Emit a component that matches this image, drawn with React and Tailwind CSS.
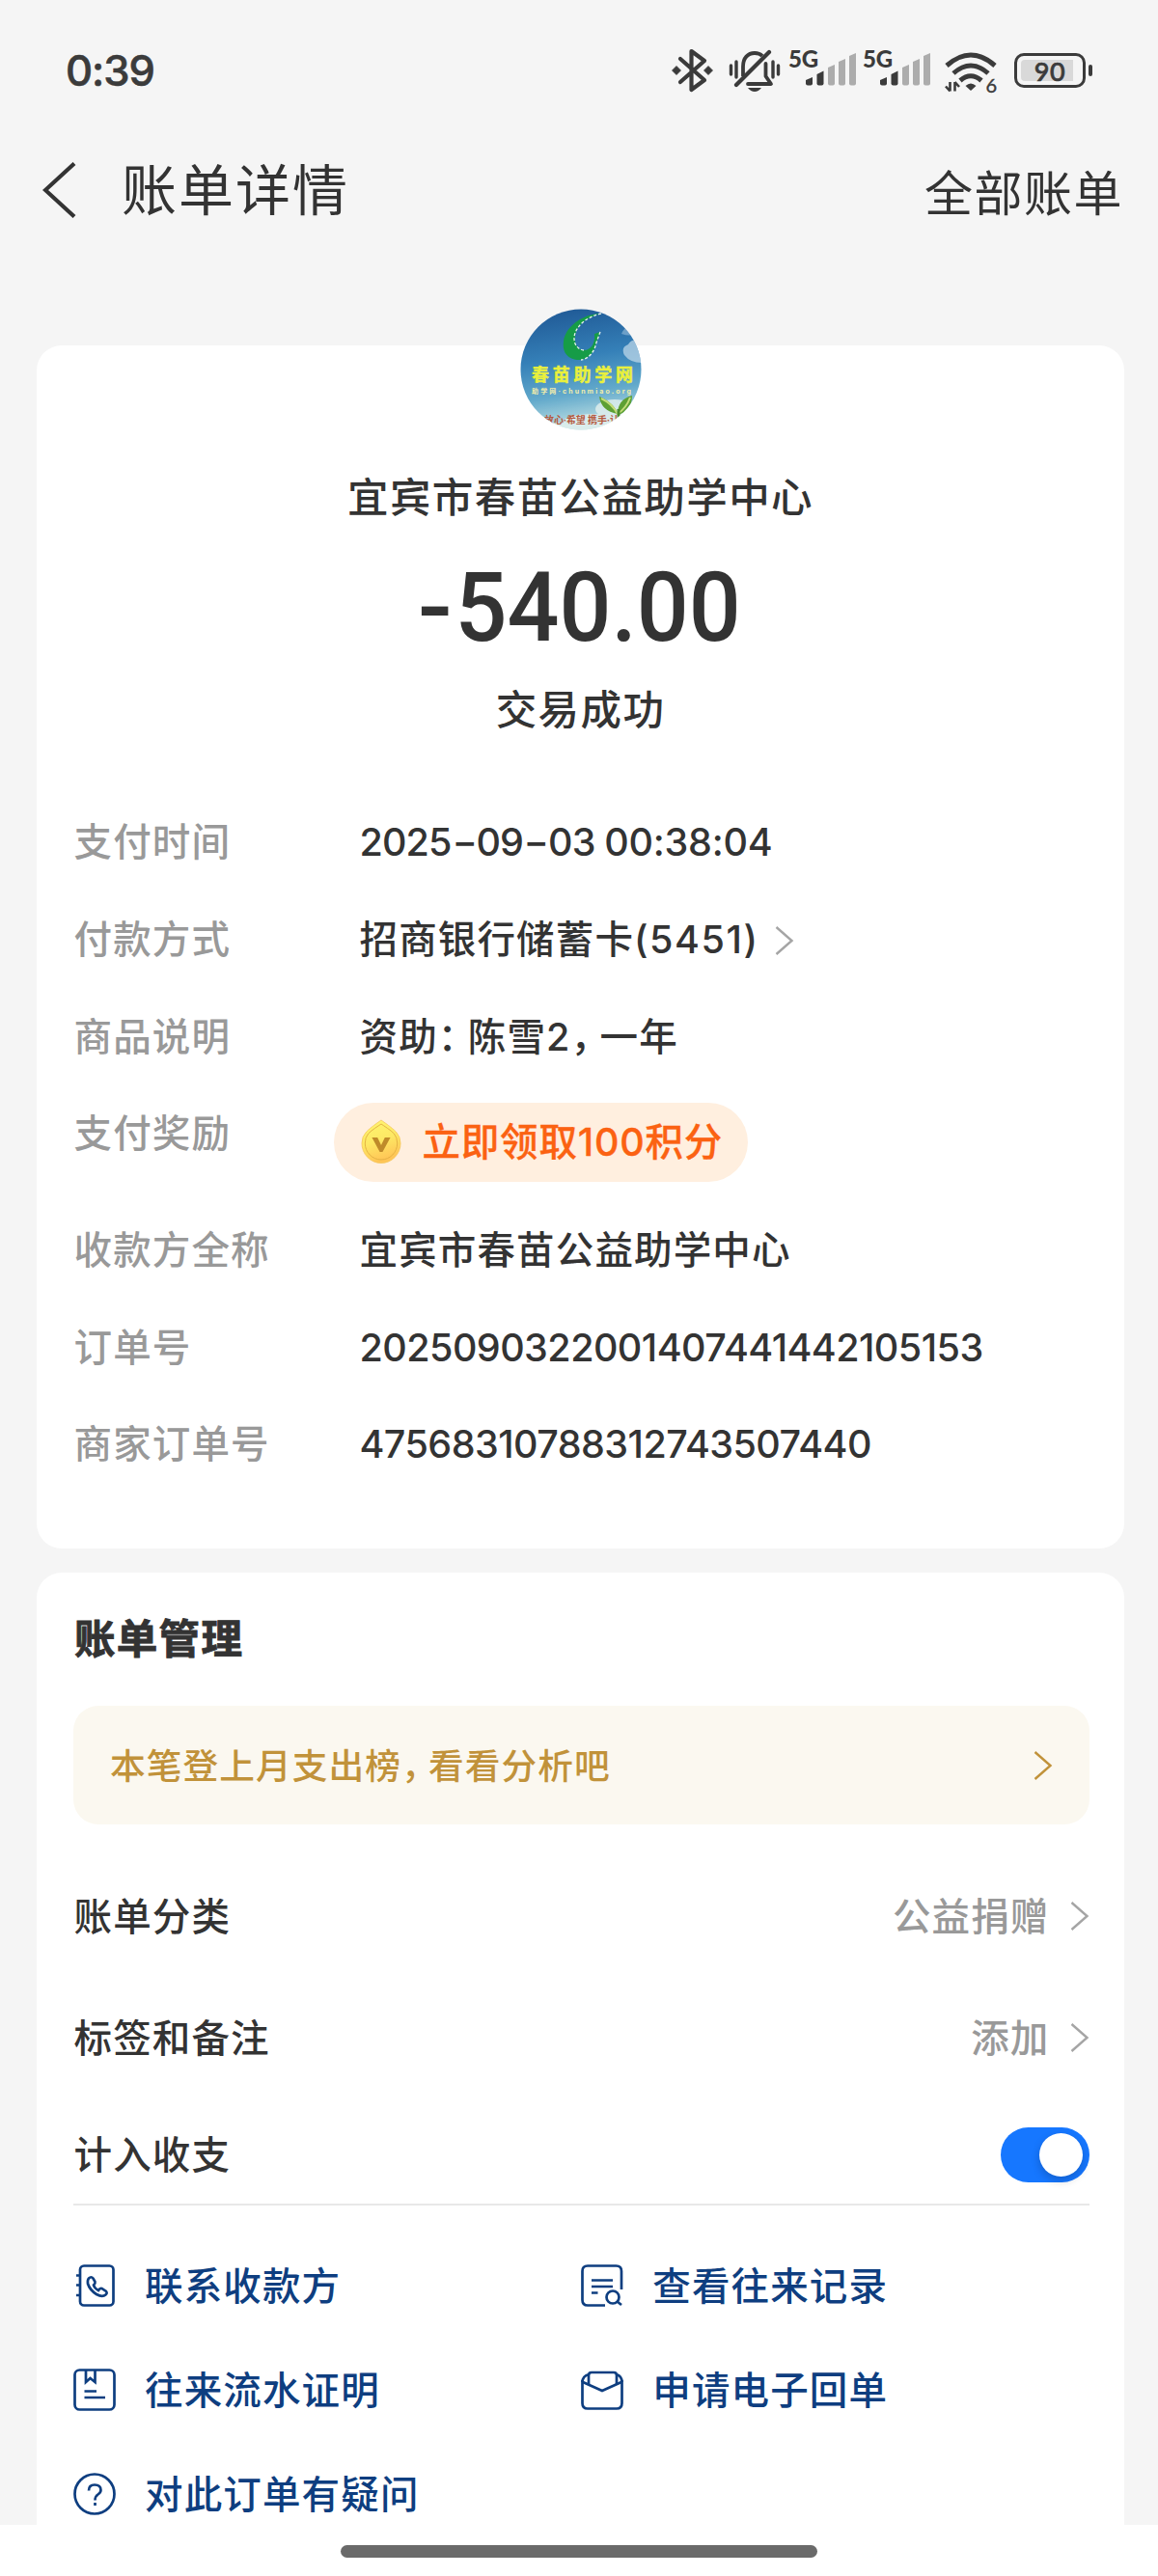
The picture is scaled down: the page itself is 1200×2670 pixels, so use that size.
function Chevron({ className = "text-[#a5a5a5]" }) {
  return (
    <svg width="20" height="30" viewBox="0 0 20 30" fill="none" className={className}>
      <path d="M1.5 1L17.5 15L1.5 29" stroke="currentColor" strokeWidth="2.4" />
    </svg>
  );
}

function Signal() {
  return (
    <div className="relative h-[46px] w-[70px]">
      <span className="absolute left-[-1px] top-0 font-['Lato','Noto_Sans_CJK_SC',sans-serif] text-[24px] font-black leading-[22px] tracking-[-0.2px]">5G</span>
      <svg width="54" height="34" viewBox="0 0 54 34" className="absolute left-[16px] top-[5px]">
        <path d="M1 28L8 25V31.500Q8 33.500 6 33.500H3Q1 33.500 1 31.500Z" fill="#3b3b3b" />
        <path d="M12.500 22L19.500 18.500V31.500Q19.500 33.500 17.500 33.500H14.500Q12.500 33.500 12.500 31.500Z" fill="#3b3b3b" />
        <path d="M24 15L31 12V31.500Q31 33.500 29 33.500H26Q24 33.500 24 31.500Z" fill="#acacac" />
        <path d="M35 9L42 6V31.500Q42 33.500 40 33.500H37Q35 33.500 35 31.500Z" fill="#acacac" />
        <path d="M46 3L53 0V31.500Q53 33.500 51 33.500H48Q46 33.500 46 31.500Z" fill="#acacac" />
      </svg>
    </div>
  );
}

function StatusBar() {
  return (
    <div className="flex h-[146px] items-center pl-[68px] pr-[68px] text-[#3b3b3b]">
      <div className="pt-[1px] text-[43.500px] font-medium leading-none tracking-[-1px] [-webkit-text-stroke:0.600px]">0:39</div>
      <div className="ml-auto flex items-center">
        <svg width="44" height="48" viewBox="0 0 44 48" fill="none">
          <path d="M9 12L34 34L20.500 44V4L34 14L9 36" stroke="currentColor" strokeWidth="4.200" strokeLinejoin="round" strokeLinecap="round" />
          <path d="M0.500 24L5 19.500L9.500 24L5 28.500ZM33.500 24L38 19.500L42.500 24L38 28.500Z" fill="currentColor" stroke="currentColor" strokeWidth="0.800" strokeLinejoin="round" />
        </svg>
        <svg width="54" height="48" viewBox="0 0 54 48" fill="none" className="ml-[15px]">
          <path d="M15 30V20C15 11 20 6 27 6C30 6 33 7 35 9" stroke="currentColor" strokeWidth="3.800" />
          <path d="M38.500 17V30L44 38H20" stroke="currentColor" strokeWidth="3.800" strokeLinecap="round" strokeLinejoin="round" />
          <path d="M8 39L42 5" stroke="currentColor" strokeWidth="4.200" strokeLinecap="round" />
          <path d="M20 42H34Q31 46 27 46Q23 46 20 42Z" fill="currentColor" />
          <path d="M2.500 19V28M8 15V31M46 15V31M51.500 19V28" stroke="currentColor" strokeWidth="3.400" strokeLinecap="round" />
        </svg>
        <div className="ml-[9px]"><Signal /></div>
        <div className="ml-[7px]"><Signal /></div>
        <div className="relative ml-[14px] h-[48px] w-[54px]">
          <svg width="54" height="48" viewBox="0 0 54 48" fill="none">
            <path d="M2 19Q27 -3 52 19" stroke="currentColor" strokeWidth="5" />
            <path d="M9 27Q27 11 45 27" stroke="currentColor" strokeWidth="5" />
            <path d="M16 34.500Q27 25 38 34.500" stroke="currentColor" strokeWidth="5" />
            <path d="M21.500 40Q27 35 32.500 40L27 45Z" fill="currentColor" />
            <path d="M5.500 36V45.500M5.500 45.500L1 40.500M10.500 45.500V36M10.500 36L15 41" stroke="currentColor" strokeWidth="2.600" />
          </svg>
          <span className="absolute bottom-[1px] right-0 font-['Lato',sans-serif] text-[20px] leading-[16px] [-webkit-text-stroke:0.400px]">6</span>
        </div>
        <div className="relative ml-[18px] flex h-[36px] w-[74px] items-center rounded-[10px] border-[3px] border-[#3b3b3b] px-[4px]">
          <div className="h-[22px] w-[54px] rounded-l-[4px] bg-[#d9d9d9]" />
          <span className="absolute inset-0 flex items-center justify-center font-['Lato',sans-serif] text-[27px] font-medium leading-none tracking-[0.500px] [-webkit-text-stroke:0.700px]">90</span>
        </div>
        <div className="ml-[3px] h-[12px] w-[4px] rounded-[2px] bg-[#3b3b3b]" />
      </div>
    </div>
  );
}

function Avatar() {
  return (
    <svg width="126" height="126" viewBox="0 0 126 126" className="block">
      <defs>
        <linearGradient id="sky" x1="0" y1="0" x2="0.150" y2="1">
          <stop offset="0" stopColor="#1d5592" />
          <stop offset="0.450" stopColor="#3580b8" />
          <stop offset="0.750" stopColor="#62a9cb" />
          <stop offset="1" stopColor="#b9dde2" />
        </linearGradient>
        <clipPath id="disc"><circle cx="63" cy="63" r="62.500" /></clipPath>
      </defs>
      <g clipPath="url(#disc)">
        <rect width="126" height="126" fill="url(#sky)" />
        <g fill="#c5dcec" opacity="0.700">
          <path d="M108 48Q104 40 112 37Q116 30 126 34V56Q114 56 108 48Z" />
          <path d="M105 26Q108 18 116 20Q122 16 126 24Q116 30 105 26Z" opacity="0.600" />
        </g>
        <g fill="#e3f0ee" opacity="0.800">
          <ellipse cx="98" cy="104" rx="20" ry="10" />
          <ellipse cx="76" cy="118" rx="32" ry="9" />
          <ellipse cx="30" cy="124" rx="26" ry="6" />
        </g>
        <path d="M84 5C64 5 46 20 45 34C43 47 52 54 63 53C71 52 77 45 79 35L83 24L77 26C78 35 74 43 66 43C58 43 55 33 58 24C61 15 71 8 84 5Z" fill="#169c47" />
        <path d="M84 5C71 8 61 15 57 25C54 34 58 42 66 43M83 24L79 35C77 45 71 52 63 53" fill="none" stroke="#e6f3ee" strokeWidth="1.300" strokeDasharray="3 2" />
        <text x="12" y="75" fontSize="18" fontWeight="700" fill="#e9f03c" stroke="#e9f03c" strokeWidth="0.500" textLength="105">春苗助学网</text>
        <text x="12" y="88" fontSize="7" fontWeight="700" fill="#f1edaa" textLength="103">助学网·chunmiao.org</text>
        <path d="M102 112Q99 98 82 91Q84 106 101 109Q101 94 116 90Q116 105 102 110Z" fill="#5da033" />
        <path d="M84 93Q95 98 101 109Q110 103 114 92" stroke="#c3dc79" strokeWidth="2" fill="none" />
        <path d="M102 104V116" stroke="#4a8a2c" strokeWidth="3" />
        <text x="25" y="119" fontSize="10" fontWeight="700" fill="#b5583c" textLength="78">放心·希望 携手·让</text>
      </g>
    </svg>
  );
}

function Row({ label, children, className = "h-[101px]" }) {
  return (
    <div className={`flex items-center ${className}`}>
      <div className="w-[296px] text-[#999999]">{label}</div>
      <div className="flex items-center text-[#333333]">{children}</div>
    </div>
  );
}

function Dash() {
  return <span className="inline-block w-[26px] scale-x-[1.450] text-center">-</span>;
}

function Coin() {
  return (
    <svg width="42" height="46" viewBox="0 0 44 46" preserveAspectRatio="none" className="-mt-[2px]">
      <defs>
        <linearGradient id="gold" x1="0" y1="0" x2="0.300" y2="1">
          <stop offset="0" stopColor="#fff772" />
          <stop offset="0.550" stopColor="#fde864" />
          <stop offset="1" stopColor="#ffc556" />
        </linearGradient>
      </defs>
      <path d="M22 1C25 3 34 9 38 13Q43 18 43 25A21 20.500 0 0 1 1 25Q1 18 6 13C10 9 19 3 22 1Z" fill="url(#gold)" stroke="#f5c65a" strokeWidth="0.800" />
      <path d="M22 5C25 7 32 11 36 15Q39.500 19 39.500 25A17.500 17 0 0 1 4.500 25Q4.500 19 8 15C12 11 19 7 22 5Z" fill="none" stroke="#e3b144" strokeWidth="1" />
      <path d="M12 19H18L22 27L26 19H32L23.500 34H20.500Z" fill="#bf8a2a" />
    </svg>
  );
}

function DetailCard() {
  return (
    <section className="ml-[38px] mr-[35px] flex h-[1247px] flex-col rounded-[26px] bg-white">
      <div className="-mt-[38px] flex justify-center"><Avatar /></div>
      <div className="mt-[40px] flex h-[60px] items-center justify-center text-[42.500px] font-medium leading-none tracking-[1.400px] text-[#333333]">宜宾市春苗公益助学中心</div>
      <div className="mt-[33px] flex h-[100px] items-center justify-center">
        <div className="flex scale-x-[0.940] font-['Roboto',sans-serif] text-[101px] font-medium leading-none text-[#333333]">
          <span className="mr-[5px] scale-x-[1.120]">-</span>
          <span>540.00</span>
        </div>
      </div>
      <div className="mt-[27px] flex h-[60px] items-center justify-center text-[42.500px] font-medium leading-none tracking-[1.400px] text-[#333333]">交易成功</div>
      <div className="mt-[57px] flex flex-col pl-[38.500px] text-[39.500px] font-medium leading-none tracking-[1.150px]">
        <Row label="支付时间">
          <div className="tracking-[-0.900px]">2025<Dash />09<Dash />03 <span className="tracking-[-0.200px]">00:38:04</span></div>
        </Row>
        <Row label="付款方式">
          <div>招商银行储蓄卡<span className="tracking-[1.500px]">(5451)</span></div>
          <div className="ml-[16px]"><Chevron /></div>
        </Row>
        <Row label="商品说明">
          <div>资助<span className="tracking-[-8.500px]">：</span>陈雪2<span className="tracking-[-9.500px]">，</span>一年</div>
        </Row>
        <div className="flex h-[120px]">
          <div className="flex h-[100px] w-[296px] items-center text-[#999999]">支付奖励</div>
          <div className="-ml-[27px] mt-[17px] flex h-[82px] w-[429px] items-center rounded-full bg-[#ffefdf] pl-[28px] text-[#fb6212]">
            <Coin />
            <span className="ml-[22px] pt-[2px] tracking-[0.800px] [-webkit-text-stroke:0.300px]">立即领取100积分</span>
          </div>
        </div>
        <Row label="收款方全称">宜宾市春苗公益助学中心</Row>
        <Row label="订单号"><span className="tracking-[-0.550px]">2025090322001407441442105153</span></Row>
        <Row label="商家订单号" className="h-[99px]"><span className="tracking-[-0.550px]">47568310788312743507440</span></Row>
      </div>
    </section>
  );
}

const iconProps = { width: 44, height: 44, viewBox: "0 0 44 44", fill: "none", stroke: "currentColor", strokeWidth: 2.7 };

function ContactIcon() {
  return (
    <svg {...iconProps}>
      <rect x="7" y="1.500" width="34.500" height="41" rx="4" />
      <path d="M3 11.500H8M3 21.500H8M3 32H8" />
      <path d="M16 14.500Q18.500 12 20.500 14.500L22.500 18Q23 19.500 21 21.500Q22 25 26 27Q27.500 24.500 29.500 25L34 28Q35.500 30 33.500 31.500Q30 34.500 24 31Q17 26.500 15 20Q14.500 16 16 14.500Z" />
    </svg>
  );
}

function RecordIcon() {
  return (
    <svg {...iconProps}>
      <path d="M42 26V7Q42 1.500 36.500 1.500H7Q1.500 1.500 1.500 7V37Q1.500 42.500 7 42.500H25" />
      <path d="M11 16.500H33M11 23H33M11 29.500H17.500" />
      <circle cx="33" cy="34" r="6.500" />
      <path d="M37.500 38.500L42 42" />
    </svg>
  );
}

function ProofIcon() {
  return (
    <svg {...iconProps}>
      <rect x="1.500" y="1.500" width="41" height="41" rx="5" />
      <path d="M13 2V14L17.500 10L22.500 14V2M11.500 23.500H24M11.500 30H33" />
    </svg>
  );
}

function EnvelopeIcon() {
  return (
    <svg {...iconProps}>
      <path d="M1.500 12V36Q1.500 41.500 7 41.500H37Q42.500 41.500 42.500 36V12" />
      <path d="M2 14L22 23L42 14" />
      <path d="M8 16V7Q8 4 11 4H34Q37 4 37 7V16M8 6Q1.500 8 1.500 14M37 6Q42.500 8 42.500 14" />
    </svg>
  );
}

function QuestionIcon() {
  return (
    <svg {...iconProps}>
      <circle cx="22" cy="22" r="20.500" />
      <path d="M16 18.500Q16 12.500 22 12.500Q28.500 12.500 28.500 18Q28.500 20.500 25.500 22.500Q22.500 24.500 22.500 28.500M22.500 31V34" />
    </svg>
  );
}

function Action({ icon, label }) {
  return (
    <div className="flex h-[108px] items-center">
      {icon}
      <span className="ml-[30px] pt-[3px]">{label}</span>
    </div>
  );
}

function ManageCard() {
  return (
    <section className="ml-[38px] mr-[35px] mt-[25px] h-[987px] rounded-t-[26px] bg-white pl-[38px] pr-[36.500px] text-[39.500px] font-medium leading-none tracking-[1.150px] text-[#333333]">
      <div className="flex h-[138px] items-center pl-[1px] text-[42.500px] font-bold tracking-[1.300px] [-webkit-text-stroke:0.900px]">账单管理</div>
      <div className="flex h-[123px] items-center justify-between rounded-[26px] bg-[#fbf8f0] pl-[38px] pr-[38px] text-[36.700px] text-[#c1923a]">
        <div className="pt-[3px] tracking-[1.050px]">本笔登上月支出榜<span className="tracking-[-8.500px]">，</span>看看分析吧</div>
        <Chevron className="text-[#c1923a]" />
      </div>
      <div className="mt-[32px] flex h-[126px] items-center justify-between">
        <span className="pl-[0.500px] pt-[3px]">账单分类</span>
        <span className="flex items-center gap-[21px] text-[#999999]"><span className="pt-[3px]">公益捐赠</span><Chevron /></span>
      </div>
      <div className="flex h-[126px] items-center justify-between">
        <span className="pl-[0.500px] pt-[3px]">标签和备注</span>
        <span className="flex items-center gap-[21px] text-[#999999]"><span className="pt-[3px]">添加</span><Chevron /></span>
      </div>
      <div className="flex h-[111px] items-center justify-between border-b-[2px] border-[#e8e8e8] pt-[8px]">
        <span className="pl-[0.500px] pt-[3px]">计入收支</span>
        <span className="flex h-[57px] w-[92px] items-center justify-end rounded-full bg-[#1677ff] pr-[7px]">
          <span className="size-[45px] rounded-full bg-white shadow-[0_4px_10px_rgba(0,0,0,0.2)]" />
        </span>
      </div>
      <div className="mt-[29px] grid grid-cols-2 text-[#0e3e80]">
        <Action icon={<ContactIcon />} label="联系收款方" />
        <Action icon={<RecordIcon />} label="查看往来记录" />
        <Action icon={<ProofIcon />} label="往来流水证明" />
        <Action icon={<EnvelopeIcon />} label="申请电子回单" />
        <Action icon={<QuestionIcon />} label="对此订单有疑问" />
      </div>
    </section>
  );
}

export default function App() {
  return (
    <main className="h-[2670px] w-[1200px] overflow-hidden bg-[#f5f5f5] font-['Inter','Noto_Sans_CJK_SC',sans-serif]">
      <StatusBar />
      <header className="flex h-[104px] items-center pl-[44px] pr-[36px] text-[#333333]">
        <svg width="36" height="58" viewBox="0 0 36 58" fill="none" className="-mt-[2px]">
          <path d="M33 1.500L3 29L33 56.500" stroke="currentColor" strokeWidth="4.200" />
        </svg>
        <h1 className="-mt-[2px] ml-[46px] text-[57px] leading-none tracking-[2px]">账单详情</h1>
        <div className="ml-auto pt-[5px] text-[50px] leading-none tracking-[1.500px]">全部账单</div>
      </header>
      <div className="h-[108px]" />
      <DetailCard />
      <ManageCard />
      <footer className="flex h-[53px] justify-center bg-white pt-[21px]">
        <div className="h-[13px] w-[494px] rounded-full bg-[#6a6a6a]" />
      </footer>
    </main>
  );
}
